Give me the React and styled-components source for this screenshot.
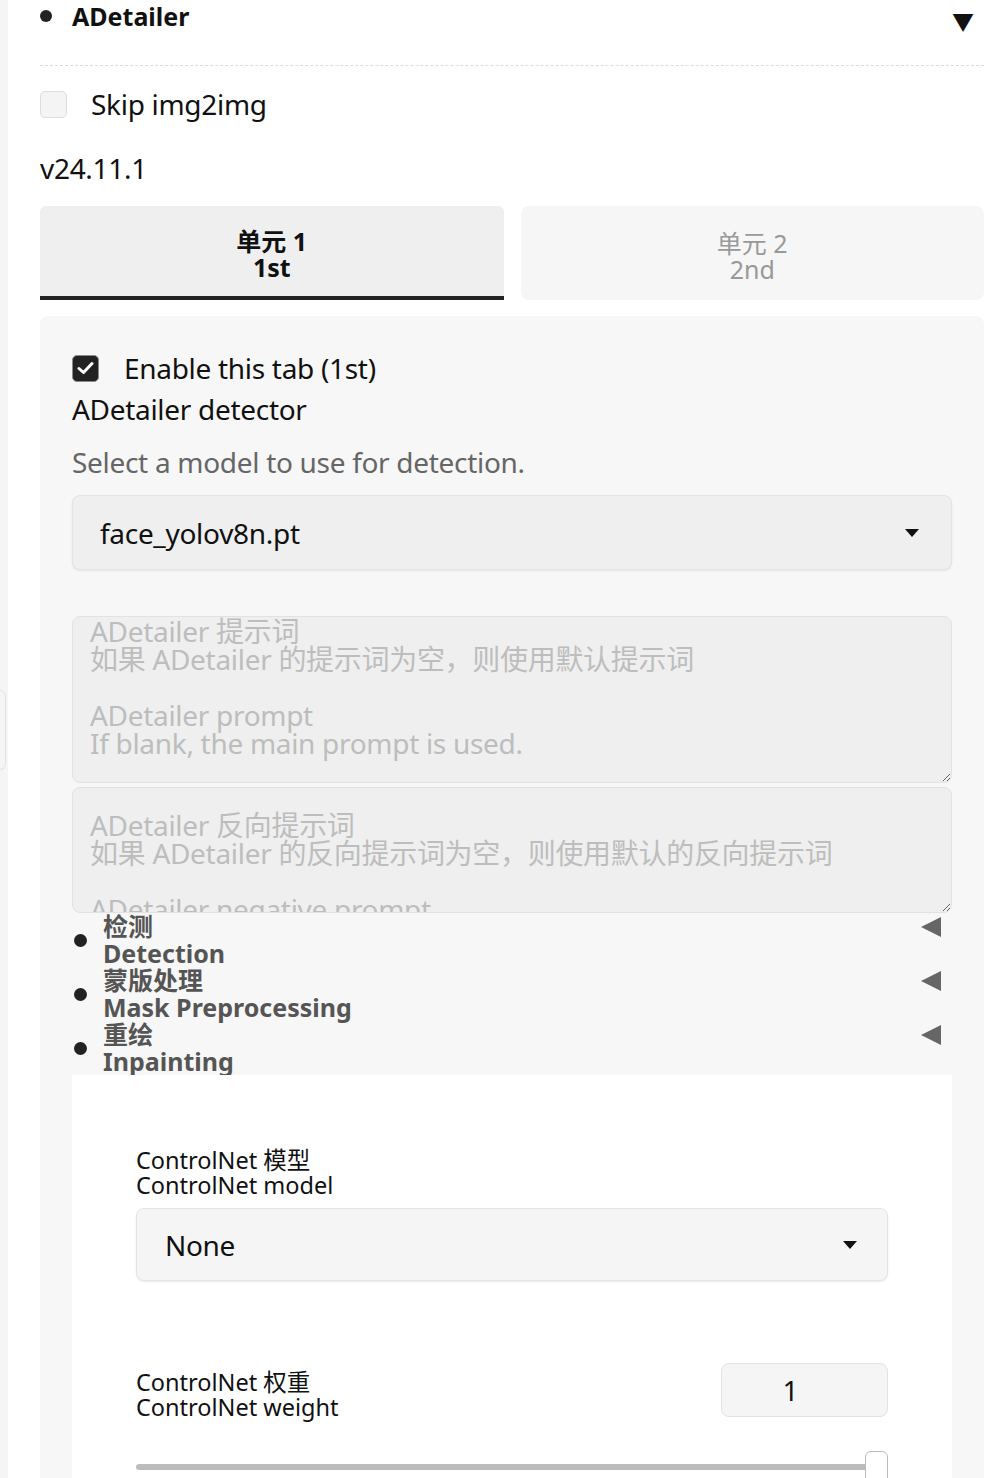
import React from "react";
import styled, { createGlobalStyle } from "styled-components";

const FONT = `"Noto Sans", "Noto Sans CJK SC", sans-serif`;

const Global = createGlobalStyle`
  html, body { margin: 0; padding: 0; background: #fff; }
  body { font-family: ${FONT}; color: #111; overflow: hidden; }
  * { box-sizing: border-box; }
`;

const Page = styled.div`
  display: flex;
  width: 1004px;
  height: 1478px;
  overflow: hidden;
`;

const Rail = styled.div`
  width: 8px;
  flex: none;
  background: #f5f5f5;
  padding-top: 690px;
`;

const RailTab = styled.div`
  width: 6px;
  height: 80px;
  border: 1px solid #e2e2e2;
  border-left: none;
  border-radius: 0 6px 6px 0;
`;

const Main = styled.div`
  width: 976px;
  padding-left: 32px;
  display: flex;
  flex-direction: column;
`;

const Header = styled.div`
  display: flex;
  align-items: center;
  height: 32px;
  padding-right: 10px;
`;

const Dot = styled.span`
  width: ${(p) => p.size || 12}px;
  height: ${(p) => p.size || 12}px;
  border-radius: 50%;
  background: #222;
  flex: none;
`;

const HeaderTitle = styled.span`
  font-size: 25px;
  line-height: 32px;
  font-weight: 700;
  margin-left: 20px;
  flex: 1;
`;

const Caret = styled.span`
  font-size: 22px;
  color: #111;
  line-height: 1;
  margin-top: 10px;
`;

const Divider = styled.div`
  margin-top: 33px;
  border-top: 1.5px dashed #dcdcdc;
`;

const CheckRow = styled.label`
  display: flex;
  align-items: center;
  gap: ${(p) => p.gap || 24}px;
  margin-top: ${(p) => p.top || 0}px;
  font-size: 28px;
  letter-spacing: -0.3px;
  line-height: 28px;
  height: 28px;
`;

const Box = styled.span`
  width: 27px;
  height: 27px;
  border-radius: 5px;
  flex: none;
  display: flex;
  align-items: center;
  justify-content: center;
  background: ${(p) => (p.checked ? "#222" : "#f4f4f4")};
  border: 1.5px solid ${(p) => (p.checked ? "#8a8a8a" : "#dedede")};
`;

const Version = styled.div`
  font-size: 28px;
  letter-spacing: -0.3px;
  line-height: 32px;
  margin-top: 34px;
`;

const Tabs = styled.div`
  display: grid;
  grid-template-columns: 1fr 1fr;
  gap: 17px;
  margin-top: 22px;
`;

const Tab = styled.div`
  height: 94px;
  display: flex;
  flex-direction: column;
  align-items: center;
  justify-content: center;
  padding-top: ${(p) => (p.active ? 6 : 10)}px;
  font-size: 25px;
  line-height: 26px;
  border-radius: ${(p) => (p.active ? "6px 6px 0 0" : "8px")};
  background: ${(p) => (p.active ? "#efefef" : "#f6f6f6")};
  color: ${(p) => (p.active ? "#111" : "#999")};
  font-weight: ${(p) => (p.active ? 700 : 400)};
  border-bottom: 4px solid ${(p) => (p.active ? "#222" : "transparent")};
`;

const Panel = styled.div`
  margin-top: 16px;
  background: #f7f7f7;
  border-radius: 8px 8px 0 0;
  padding: 38px 32px 0 32px;
  display: flex;
  flex-direction: column;
  flex: 1;
`;

const Label = styled.div`
  font-size: 28px;
  letter-spacing: -0.3px;
  line-height: 32px;
  margin-top: ${(p) => p.top || 0}px;
  color: ${(p) => p.color || "#111"};
`;

const Select = styled.div`
  margin-top: ${(p) => p.top || 0}px;
  height: ${(p) => p.h || 75}px;
  display: flex;
  align-items: center;
  justify-content: space-between;
  padding: 0 ${(p) => p.pr || 32}px 0 ${(p) => p.pl || 27}px;
  background: ${(p) => p.bg || "#efefef"};
  border: 1.5px solid #e4e4e4;
  border-radius: 8px;
  box-shadow: 0 1px 2px rgba(0, 0, 0, 0.08);
  font-size: 28px;
  letter-spacing: -0.3px;
  color: #111;
`;

const Arrow = styled.span`
  width: 0;
  height: 0;
  border-left: 7px solid transparent;
  border-right: 7px solid transparent;
  border-top: 8px solid #111;
`;

const TextArea = styled.textarea`
  display: block;
  width: 100%;
  margin-top: ${(p) => p.top || 0}px;
  height: ${(p) => p.h}px;
  padding: ${(p) => p.pt}px 17px 0 17px;
  font-family: ${FONT};
  font-size: 28px;
  letter-spacing: -0.3px;
  line-height: 28px;
  background: #efefef;
  border: 1.5px solid #e2e2e2;
  border-radius: 8px;
  resize: vertical;
  outline: none;
  overflow: hidden;
  &::placeholder {
    color: #bdbdbd;
  }
`;

const Accordion = styled.div`
  height: 54px;
  display: flex;
  align-items: center;
  padding: 0 11px 0 2px;
`;

const AccTitle = styled.div`
  flex: 1;
  margin-left: 16px;
  font-size: 25px;
  line-height: 27px;
  font-weight: 700;
  color: #555;
`;

const LeftTri = styled.span`
  align-self: flex-start;
  margin-top: 4px;
  width: 0;
  height: 0;
  border-top: 10px solid transparent;
  border-bottom: 10px solid transparent;
  border-right: 20px solid #666;
`;

const WhiteBox = styled.div`
  background: #fff;
  padding: 73px 64px 0 64px;
  flex: 1;
  display: flex;
  flex-direction: column;
`;

const SmallLabel = styled.div`
  font-size: 23.5px;
  line-height: 25px;
  color: #111;
  margin-bottom: ${(p) => p.mb || 0}px;
`;

const WeightRow = styled.div`
  margin-top: 82px;
  display: flex;
  justify-content: space-between;
  align-items: flex-end;
`;

const NumberBox = styled.div`
  width: 167px;
  height: 54px;
  background: #f5f5f5;
  border: 1.5px solid #e2e2e2;
  border-radius: 8px;
  display: flex;
  align-items: center;
  justify-content: center;
  padding-right: 28px;
  font-size: 28px;
`;

const SliderWrap = styled.div`
  position: relative;
  margin-top: 34px;
  height: 40px;
`;

const Track = styled.div`
  margin-top: 13px;
  height: 6px;
  width: 734px;
  border-radius: 3px;
  background: #bcbcbc;
`;

const Thumb = styled.div`
  position: absolute;
  top: 0;
  right: 0;
  width: 23px;
  height: 40px;
  background: #fff;
  border: 1.5px solid #bbb;
  border-radius: 6px;
`;

const Check = () => (
  <svg width="17" height="14" viewBox="0 0 17 14">
    <path d="M2 7.5 L6.5 11.5 L15 2.5" fill="none" stroke="#fff" strokeWidth="3" strokeLinecap="round" strokeLinejoin="round" />
  </svg>
);

const sections = [
  ["检测", "Detection"],
  ["蒙版处理", "Mask Preprocessing"],
  ["重绘", "Inpainting"],
];

export default function App() {
  return (
    <>
      <Global />
      <Page>
        <Rail>
          <RailTab />
        </Rail>
        <Main>
          <Header>
            <Dot />
            <HeaderTitle>ADetailer</HeaderTitle>
            <Caret>▼</Caret>
          </Header>
          <Divider />
          <CheckRow top={24}>
            <Box />
            <span>Skip img2img</span>
          </CheckRow>
          <Version>v24.11.1</Version>
          <Tabs>
            <Tab active>
              <span>单元 1</span>
              <span>1st</span>
            </Tab>
            <Tab>
              <span>单元 2</span>
              <span>2nd</span>
            </Tab>
          </Tabs>
          <Panel>
            <CheckRow gap={25}>
              <Box checked>
                <Check />
              </Box>
              <span>Enable this tab (1st)</span>
            </CheckRow>
            <Label top={11}>ADetailer detector</Label>
            <Label top={21} color="#666">Select a model to use for detection.</Label>
            <Select top={17}>
              <span>face_yolov8n.pt</span>
              <Arrow />
            </Select>
            <TextArea
              top={46}
              h={167}
              pt={0}
              placeholder={"ADetailer 提示词\n如果 ADetailer 的提示词为空，则使用默认提示词\n\nADetailer prompt\nIf blank, the main prompt is used."}
            />
            <TextArea
              top={4}
              h={126}
              pt={23}
              placeholder={"ADetailer 反向提示词\n如果 ADetailer 的反向提示词为空，则使用默认的反向提示词\n\nADetailer negative prompt\nIf blank, the main negative prompt is used."}
            />
            {sections.map(([zh, en]) => (
              <Accordion key={en}>
                <Dot size={13} />
                <AccTitle>
                  <div>{zh}</div>
                  <div>{en}</div>
                </AccTitle>
                <LeftTri />
              </Accordion>
            ))}
            <WhiteBox>
              <SmallLabel>
                <div>ControlNet 模型</div>
                <div>ControlNet model</div>
              </SmallLabel>
              <Select top={10} h={73} bg="#f5f5f5" pl={28} pr={30}>
                <span>None</span>
                <Arrow />
              </Select>
              <WeightRow>
                <SmallLabel mb={-3}>
                  <div>ControlNet 权重</div>
                  <div>ControlNet weight</div>
                </SmallLabel>
                <NumberBox>1</NumberBox>
              </WeightRow>
              <SliderWrap>
                <Track />
                <Thumb />
              </SliderWrap>
            </WhiteBox>
          </Panel>
        </Main>
      </Page>
    </>
  );
}
